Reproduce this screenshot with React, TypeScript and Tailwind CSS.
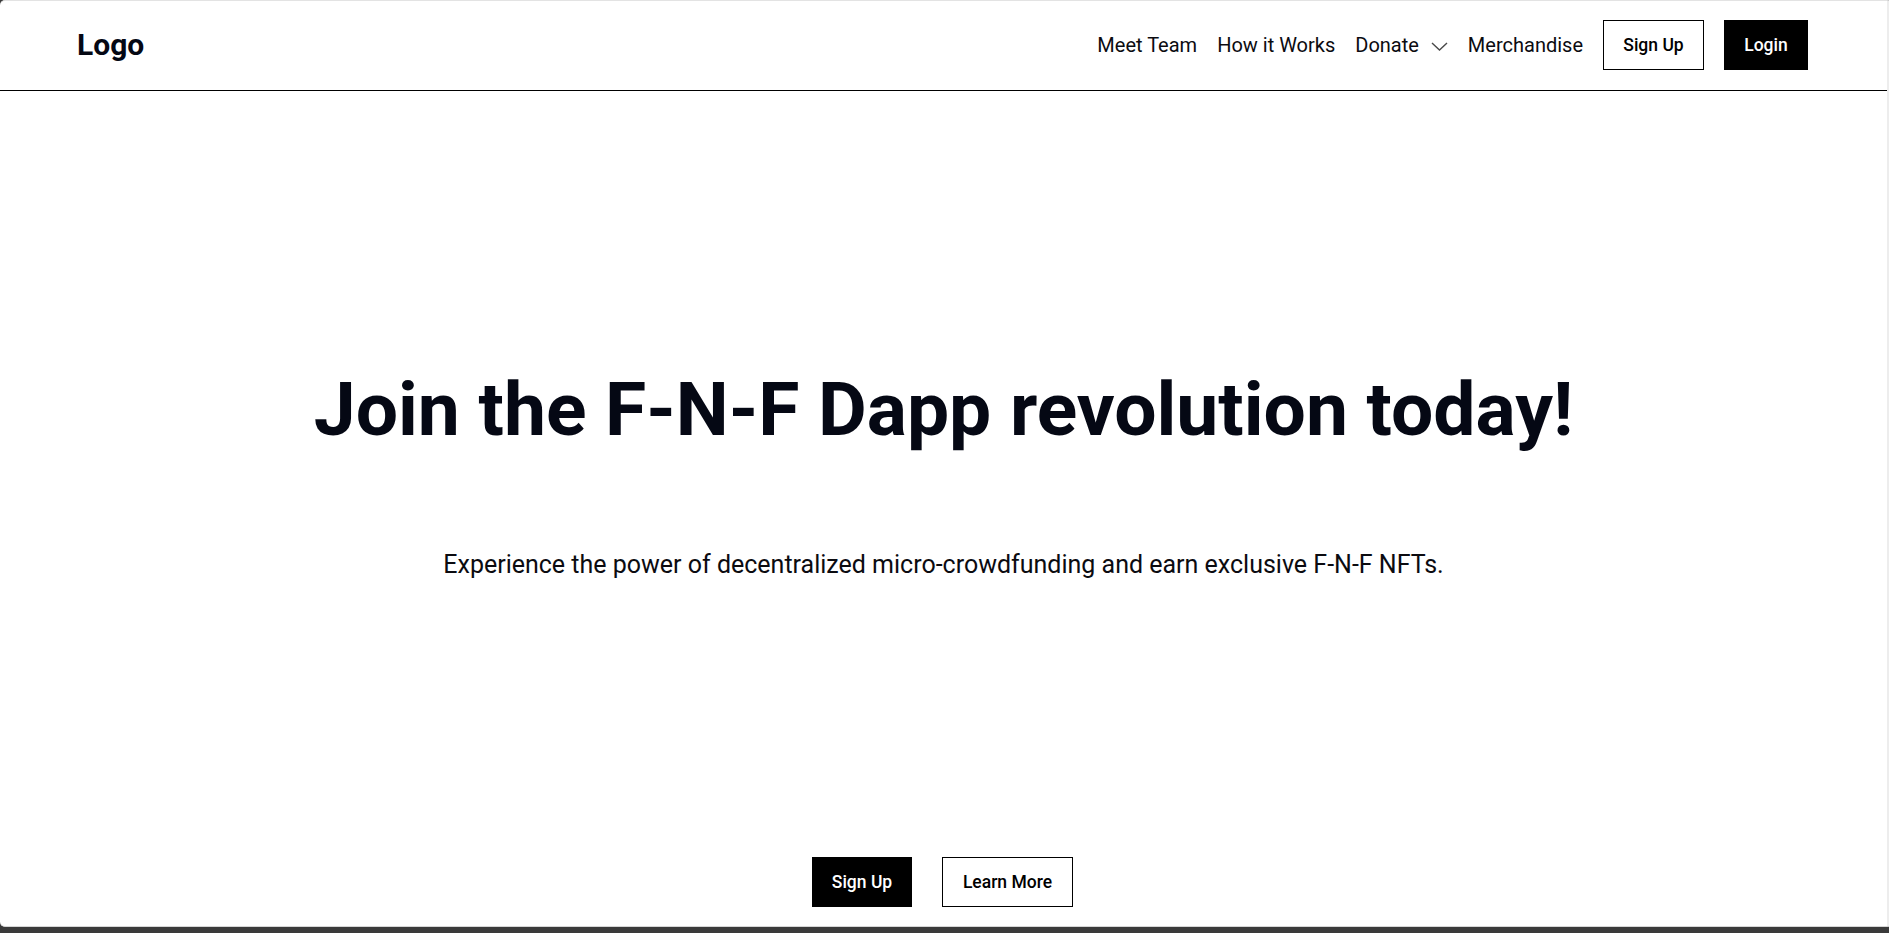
import React from "react";

export default function App() {
  return (
    <div className="h-screen w-full bg-[#3a3a3a] pb-[6px] flex flex-col" style={{ fontFamily: "Roboto, 'Noto Sans', sans-serif" }}>
      <div className="flex-1 flex flex-col bg-white border-t border-t-[#e3e3e3] border-r-2 border-r-[#ededed] border-b border-b-[#d6d6d6] rounded-tl-[5px] rounded-bl-[5px] overflow-hidden">
        <header className="h-[90px] shrink-0 flex items-center justify-between pl-[77px] pr-[79px] pb-[1px] border-b-[1.5px] border-black">
          <div className="text-[30px] font-bold text-[#050814] leading-none">Logo</div>
          <nav className="flex items-center gap-[20px] text-[20px] text-[#0b0b10]">
            <a className="leading-none">Meet Team</a>
            <a className="leading-none">How it Works</a>
            <div className="flex items-center">
              <span className="leading-none">Donate</span>
              <svg className="ml-[12px] mt-[2px]" width="17" height="9" viewBox="0 0 17 9" fill="none">
                <polyline points="1,1 8.5,8 16,1" stroke="#4a4a4a" strokeWidth="1.4" fill="none" />
              </svg>
            </div>
            <a className="leading-none">Merchandise</a>
            <button className="w-[101px] h-[50px] border border-black bg-white text-[17.5px] font-medium text-black flex items-center justify-center">
              Sign Up
            </button>
            <button className="w-[84px] h-[50px] bg-black text-[17.5px] font-medium text-white flex items-center justify-center">
              Login
            </button>
          </nav>
        </header>
        <main className="flex-1 flex flex-col items-center pt-[281px]">
          <h1 className="text-[75px] leading-none font-bold text-[#050814]">
            Join the F-N-F Dapp revolution today!
          </h1>
          <p className="mt-[100px] text-[25px] leading-[35px] text-[#0b0b10]">
            Experience the power of decentralized micro-crowdfunding and earn exclusive F-N-F NFTs.
          </p>
          <div className="mt-[275px] flex items-center gap-[30px] pr-[2px]">
            <button className="w-[100px] h-[50px] bg-black text-white text-[17.5px] font-medium flex items-center justify-center">
              Sign Up
            </button>
            <button className="w-[131px] h-[50px] border border-black bg-white text-black text-[17.5px] font-medium flex items-center justify-center">
              Learn More
            </button>
          </div>
        </main>
      </div>
    </div>
  );
}
